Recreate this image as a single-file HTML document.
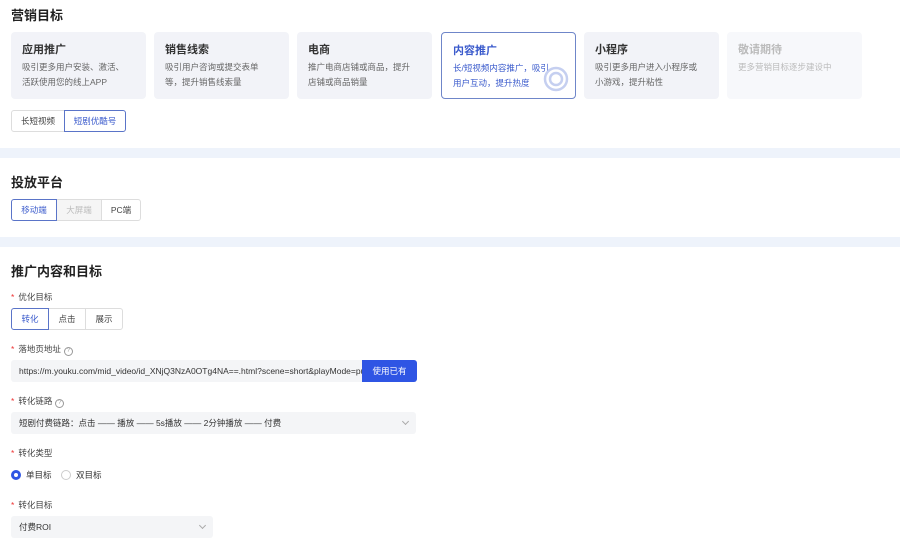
<!DOCTYPE html><html><head><meta charset="utf-8"><style>
*{box-sizing:border-box;margin:0;padding:0}
body{width:900px;height:544px;position:relative;background:#fff;font-family:"Liberation Sans","Noto Sans CJK SC",sans-serif;color:#333;overflow:hidden}
.a{position:absolute}
.band{position:absolute;left:0;width:900px;height:10px;background:#eef3fb}
.h{position:absolute;left:11px;font-size:13px;font-weight:bold;color:#222}
.card{position:absolute;top:32px;width:135px;height:67px;background:#f2f3f8;border-radius:4px;padding:9px 11px;overflow:hidden}
.card b{display:block;font-size:11px;color:#333;margin-bottom:3px}
.card p{font-size:8.5px;color:#666;line-height:15px}
.card.s{background:#fff;border:1px solid #6f86c9}
.card.s b,.card.s p{color:#3b5bcc}
.card.d{background:#f7f8fb}.card.d b,.card.d p{color:#bbb}
.btn{position:absolute;height:22px;border:1px solid #ddd;font-size:8.5px;line-height:20px;text-align:center;color:#444;background:#fff}
.btn.on{border-color:#5a74c8;color:#3b5bcc;z-index:1}
.lab{position:absolute;left:11px;font-size:8.5px;color:#444}
.lab:before{content:"*";color:#e33;margin-right:4px}
.q{display:inline-block;width:9px;height:9px;border:1px solid #999;border-radius:50%;font-size:6px;line-height:7px;text-align:center;color:#999;margin-left:3px;vertical-align:0}
.inp{position:absolute;height:22px;background:#f4f5f7;border-radius:3px;font-size:8.5px;line-height:22px;padding-left:8px;color:#333;overflow:hidden;white-space:nowrap}
.chev{position:absolute;right:8px;top:7px;width:5px;height:5px;border-right:1px solid #aaa;border-bottom:1px solid #aaa;transform:rotate(45deg)}
</style></head><body>
<div class="h" style="top:5px">营销目标</div>
<div class="card" style="left:11px"><b>应用推广</b><p>吸引更多用户安装、激活、<br>活跃使用您的线上APP</p></div>
<div class="card" style="left:154px"><b>销售线索</b><p>吸引用户咨询或提交表单<br>等，提升销售线索量</p></div>
<div class="card" style="left:297px"><b>电商</b><p>推广电商店铺或商品，提升<br>店铺或商品销量</p></div>
<div class="card s" style="left:441px"><b>内容推广</b><p>长/短视频内容推广，吸引<br>用户互动，提升热度</p>
<svg class="a" style="left:100px;top:32px" width="28" height="28" viewBox="0 0 28 28"><circle cx="14" cy="14" r="11" fill="none" stroke="#c5cff0" stroke-width="2.5"/><circle cx="14" cy="14" r="6" fill="none" stroke="#c5cff0" stroke-width="2.5"/></svg></div>
<div class="card" style="left:584px"><b>小程序</b><p>吸引更多用户进入小程序或<br>小游戏，提升粘性</p></div>
<div class="card d" style="left:727px"><b>敬请期待</b><p>更多营销目标逐步建设中</p></div>
<div class="btn" style="left:11px;top:110px;width:54px;border-radius:3px 0 0 3px">长短视频</div>
<div class="btn on" style="left:64px;top:110px;width:62px;border-radius:0 3px 3px 0">短剧优酷号</div>
<div class="band" style="top:148px"></div>
<div class="h" style="top:172px">投放平台</div>
<div class="btn on" style="left:11px;top:199px;width:46px;border-radius:3px 0 0 3px">移动端</div>
<div class="btn" style="left:56px;top:199px;width:46px;background:#f5f5f5;color:#bbb">大屏端</div>
<div class="btn" style="left:101px;top:199px;width:40px;border-radius:0 3px 3px 0">PC端</div>
<div class="band" style="top:237px"></div>
<div class="h" style="top:261px">推广内容和目标</div>
<div class="lab" style="top:291px">优化目标</div>
<div class="btn on" style="left:11px;top:308px;width:38px;border-radius:3px 0 0 3px">转化</div>
<div class="btn" style="left:48px;top:308px;width:38px">点击</div>
<div class="btn" style="left:85px;top:308px;width:38px;border-radius:0 3px 3px 0">展示</div>
<div class="lab" style="top:343px">落地页地址<span class="q">?</span></div>
<div class="inp" style="left:11px;top:360px;width:352px;border-radius:3px 0 0 3px">https://m.youku.com/mid_video/id_XNjQ3NzA0OTg4NA==.html?scene=short&amp;playMode=pug</div>
<div class="a" style="left:362px;top:360px;width:55px;height:22px;background:#2f55e4;color:#fff;font-size:8.5px;line-height:22px;text-align:center;border-radius:0 3px 3px 0">使用已有</div>
<div class="lab" style="top:395px">转化链路<span class="q">?</span></div>
<div class="inp" style="left:11px;top:412px;width:405px">短剧付费链路：点击 —— 播放 —— 5s播放 —— 2分钟播放 —— 付费<i class="chev"></i></div>
<div class="lab" style="top:447px">转化类型</div>
<div class="a" style="left:11px;top:470px;width:10px;height:10px;border-radius:50%;border:3px solid #2f55e4"></div>
<div class="a" style="left:26px;top:469px;font-size:8.5px">单目标</div>
<div class="a" style="left:61px;top:470px;width:10px;height:10px;border-radius:50%;border:1px solid #ccc"></div>
<div class="a" style="left:76px;top:469px;font-size:8.5px">双目标</div>
<div class="lab" style="top:499px">转化目标</div>
<div class="inp" style="left:11px;top:516px;width:202px">付费ROI<i class="chev"></i></div>
</body></html>
